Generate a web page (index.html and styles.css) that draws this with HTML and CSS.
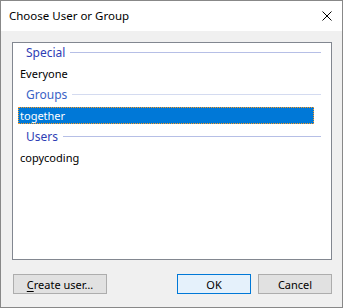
FILE: index.html
```html
<!DOCTYPE html>
<html lang="en">
<head>
    <meta charset="UTF-8">
    <title>Choose User or Group</title>
    <link rel="stylesheet" href="styles.css">
</head>
<body>
    <div class="dialog">
        <div class="title-bar">
            <span class="title">Choose User or Group</span>
            <svg class="close" width="10" height="10" viewBox="0 0 10 10">
                <path d="M0.5 0.5 L9.5 9.5 M9.5 0.5 L0.5 9.5" stroke="#000" stroke-width="1"/>
            </svg>
        </div>
        <div class="content">
            <div class="list-box">
                <div class="list-header"><span>Special</span></div>
                <div class="list-item">Everyone</div>
                <div class="list-header light"><span>Groups</span></div>
                <div class="list-item selected">together</div>
                <div class="list-header"><span>Users</span></div>
                <div class="list-item">copycoding</div>
            </div>
            <div class="button-row">
                <button class="btn btn-create"><u>C</u>reate user…</button>
                <div class="button-group">
                    <button class="btn btn-default">OK</button>
                    <button class="btn">Cancel</button>
                </div>
            </div>
        </div>
    </div>
</body>
</html>
```

FILE: styles.css
```css
/* --- Window --- */
* { box-sizing: border-box; }
body {
    margin: 0;
    font-family: "Segoe UI", "Noto Sans", sans-serif;
    font-size: 11px;
    color: #000;
}
.dialog {
    width: 343px;
    height: 308px;
    border: 1px solid #888;
    background-color: #f0f0f0;
    display: flex;
    flex-direction: column;
}

/* --- Title Bar --- */
.title-bar {
    height: 30px;
    background-color: #fff;
    display: flex;
    align-items: center;
    justify-content: space-between;
    padding: 0 10px 0 8px;
}
.title {
    font-size: 11.5px;
    margin-top: -1px;
}
.close { display: block; margin-top: -1px; }

/* --- Content --- */
.content {
    flex: 1;
    padding: 11px 10px 0 11px;
}
.list-box {
    width: 320px;
    height: 218px;
    background-color: #fff;
    border: 1px solid #828790;
    padding-top: 1px;
    display: flex;
    flex-direction: column;
    gap: 4px;
}
.list-item, .list-header {
    height: 17px;
    flex: none;
    margin: 0 17px 0 5px;
    display: flex;
    align-items: center;
    padding-left: 2px;
    white-space: nowrap;
}
.list-header {
    margin-right: 10px;
    padding-left: 8px;
    font-size: 12px;
    color: #2e3db5;
}
.list-header::after {
    content: "";
    flex: 1;
    height: 1px;
    margin-left: 5px;
    background-color: #b6bfe6;
}
.list-header.light { color: #3a63c6; }
.list-header.light::after { background-color: #d4dbf0; }
.list-item.selected {
    background-color: #0078d7;
    color: #fff;
    border: 1px dotted #ff9a1f;
    padding-left: 1px;
}

/* --- Buttons --- */
.button-row {
    display: flex;
    justify-content: space-between;
    margin-top: 14px;
    padding-left: 1px;
}
.button-group {
    display: flex;
    gap: 7px;
}
.btn {
    height: 20px;
    width: 74px;
    padding: 0;
    background-color: #e1e1e1;
    border: 1px solid #adadad;
    font-family: inherit;
    font-size: 11px;
    color: #000;
}
.btn-create { width: 94px; }
.btn u { text-decoration-thickness: 1px; text-underline-offset: 2px; }
.btn-default {
    background-color: #e5f1fb;
    border-color: #0078d7;
}
```
